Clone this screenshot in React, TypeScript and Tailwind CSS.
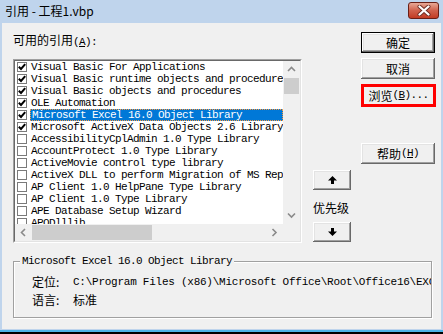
import React from "react";

const MONO = "font-['Liberation_Mono',monospace] text-[11px] tracking-[-0.6px]";
const CJK = "font-['Noto_Sans_CJK_SC','Noto_Sans',sans-serif] text-[12px]";

const items: { label: string; checked: boolean; selected?: boolean }[] = [
  { label: "Visual Basic For Applications", checked: true },
  { label: "Visual Basic runtime objects and procedures", checked: true },
  { label: "Visual Basic objects and procedures", checked: true },
  { label: "OLE Automation", checked: true },
  { label: "Microsoft Excel 16.0 Object Library", checked: true, selected: true },
  { label: "Microsoft ActiveX Data Objects 2.6 Library", checked: true },
  { label: "AccessibilityCplAdmin 1.0 Type Library", checked: false },
  { label: "AccountProtect 1.0 Type Library", checked: false },
  { label: "ActiveMovie control type library", checked: false },
  { label: "ActiveX DLL to perform Migration of MS Repository", checked: false },
  { label: "AP Client 1.0 HelpPane Type Library", checked: false },
  { label: "AP Client 1.0 Type Library", checked: false },
  { label: "APE Database Setup Wizard", checked: false },
  { label: "APODlllib", checked: false },
];

const BTN3D =
  "bg-[#f0f0f0] shadow-[inset_-1px_-1px_0_#696969,inset_1px_1px_0_#ffffff,inset_-2px_-2px_0_#a0a0a0,inset_2px_2px_0_#e3e3e3]";

function Check({ checked }: { checked: boolean }) {
  return (
    <div className="w-[10px] h-[10px] border border-[#7a7a7a] bg-white flex items-center justify-center shrink-0">
      {checked && (
        <svg width="8" height="8" viewBox="0 0 8 8">
          <polyline points="0.8,3.8 3,6 7.2,1.2" fill="none" stroke="#000" strokeWidth="2" />
        </svg>
      )}
    </div>
  );
}

function Chevron({ dir }: { dir: "up" | "down" | "left" | "right" }) {
  const pts: Record<string, string> = {
    up: "1,5 4.5,1.5 8,5",
    down: "1,1.5 4.5,5 8,1.5",
    left: "5,1 1.5,4.5 5,8",
    right: "1.5,1 5,4.5 1.5,8",
  };
  const vertical = dir === "up" || dir === "down";
  return (
    <svg width={vertical ? 9 : 7} height={vertical ? 7 : 9} viewBox={vertical ? "0 0 9 7" : "0 0 7 9"}>
      <polyline points={pts[dir]} fill="none" stroke="#8a8a8a" strokeWidth="1.6" />
    </svg>
  );
}

function ArrowIcon({ up }: { up: boolean }) {
  return (
    <svg width="9" height="8" viewBox="0 0 9 8">
      <polygon
        points={up ? "4.5,0 9,4.5 6,4.5 6,8 3,8 3,4.5 0,4.5" : "4.5,8 9,3.5 6,3.5 6,0 3,0 3,3.5 0,3.5"}
        fill="#000"
      />
    </svg>
  );
}

export default function App() {
  return (
    <div className="w-[443px] h-[334px] bg-black flex flex-col overflow-hidden">
      <div className="h-[332px] bg-[#bfd4ec] flex flex-col">
        {/* Title bar */}
        <div className="h-[23px] flex items-start shrink-0">
          <div className={`${CJK} pl-[5px] h-[22px] leading-[22px] text-black`}>引用 - 工程1.vbp</div>
          <div className="ml-auto mr-[4px] mt-[2px] w-[31px] h-[17px] rounded-[3px] border border-[#6a1f16] bg-linear-to-b from-[#e7a896] via-[#d0614c] to-[#c23a22] flex items-center justify-center">
            <svg width="14" height="11" viewBox="0 0 14 11">
              <path d="M2.5 1.5 L11.5 9.5 M11.5 1.5 L2.5 9.5" stroke="#6b2a20" strokeWidth="4" strokeLinecap="round" />
              <path d="M2.5 1.5 L11.5 9.5 M11.5 1.5 L2.5 9.5" stroke="#ffffff" strokeWidth="2.3" strokeLinecap="round" />
            </svg>
          </div>
        </div>

        {/* Client area */}
        <div className="flex-1 mx-[2px] bg-[#f0f0f0] flex flex-col pl-[11px] pt-[9px]">
          <div className="flex">
            {/* Left column */}
            <div className="w-[289px] flex flex-col">
              <div className={`${CJK} mt-[2px] h-[12px] leading-[12px] text-black whitespace-nowrap`}>
                可用的引用
                <span className={MONO}>
                  (<span className="underline">A</span>):
                </span>
              </div>
              <div className="mt-[13px] h-[184px] border border-t-[#a0a0a0] border-l-[#a0a0a0] border-r-white border-b-white">
                <div className="h-full border border-t-[#696969] border-l-[#696969] border-r-[#e3e3e3] border-b-[#e3e3e3] bg-white flex flex-col">
                  <div className="flex h-[163px]">
                    <div className="flex-1 overflow-hidden">
                      {items.map((it) => (
                        <div key={it.label} className="h-[12px] flex items-center">
                          <div className="ml-[2px]">
                            <Check checked={it.checked} />
                          </div>
                          <div
                            className={`ml-[3px] flex-1 h-[12px] pl-[1px] whitespace-nowrap overflow-hidden ${MONO} leading-[10px] ${
                              it.selected
                                ? "bg-[#0078d7] text-white border border-dotted border-[#ff9a3c] pl-0"
                                : "text-black pt-[1px]"
                            }`}
                          >
                            {it.label}
                          </div>
                        </div>
                      ))}
                    </div>
                    {/* vertical scrollbar */}
                    <div className="w-[17px] bg-[#f0f0f0] flex flex-col">
                      <div className="h-[17px] flex items-center justify-center">
                        <Chevron dir="up" />
                      </div>
                      <div className="h-[16px] mx-[1px] bg-[#cdcdcd]" />
                      <div className="flex-1" />
                      <div className="h-[17px] flex items-center justify-center">
                        <Chevron dir="down" />
                      </div>
                    </div>
                  </div>
                  {/* horizontal scrollbar */}
                  <div className="flex h-[17px]">
                    <div className="flex-1 bg-[#f0f0f0] flex">
                      <div className="w-[17px] flex items-center justify-center">
                        <Chevron dir="left" />
                      </div>
                      <div className="w-[120px] my-[1px] bg-[#cdcdcd]" />
                      <div className="flex-1" />
                      <div className="w-[17px] flex items-center justify-center">
                        <Chevron dir="right" />
                      </div>
                    </div>
                    <div className="w-[17px] bg-[#f0f0f0]" />
                  </div>
                </div>
              </div>
            </div>

            {/* Middle column */}
            <div className="w-[38px] ml-[11px] flex flex-col">
              <div className={`mt-[138px] h-[20px] ${BTN3D} flex items-center justify-center`}>
                <ArrowIcon up />
              </div>
              <div className={`${CJK} mt-[12px] h-[12px] leading-[12px] text-black whitespace-nowrap`}>优先级</div>
              <div className={`mt-[8px] h-[20px] ${BTN3D} flex items-center justify-center`}>
                <ArrowIcon up={false} />
              </div>
            </div>

            {/* Right column */}
            <div className="w-[74px] ml-[10px] flex flex-col">
              <div className="h-[21px] border border-black">
                <div className={`h-full ${BTN3D} ${CJK} flex items-center justify-center text-black`}>确定</div>
              </div>
              <div className={`mt-[5px] h-[21px] ${BTN3D} ${CJK} flex items-center justify-center text-black`}>取消</div>
              <div className={`mt-[5px] w-[75px] h-[23px] border-[3px] border-[#ff0000] bg-[#f0f0f0] ${CJK} flex items-center justify-center text-black whitespace-nowrap`}>
                浏览
                <span className={MONO}>
                  (<span className="underline">B</span>)...
                </span>
              </div>
              <div className={`mt-[36px] h-[21px] ${BTN3D} ${CJK} flex items-center justify-center text-black whitespace-nowrap`}>
                帮助
                <span className={MONO}>
                  (<span className="underline">H</span>)
                </span>
              </div>
            </div>
          </div>

          {/* Group box */}
          <div className="relative mt-[18px] w-[419px] h-[57px] border border-[#a0a0a0] shadow-[1px_1px_0_#ffffff,inset_1px_1px_0_#ffffff]">
            <div className={`absolute left-[6px] -top-[7px] px-[2px] bg-[#f0f0f0] ${MONO} leading-[12px] text-black whitespace-nowrap`}>
              Microsoft Excel 16.0 Object Library
            </div>
            <div className="pl-[18px] pt-[14px] flex flex-col overflow-hidden h-full">
              <div className="h-[12px] flex items-center whitespace-nowrap">
                <span className={`${CJK} w-[41px] shrink-0 leading-[12px] text-black`}>定位:</span>
                <span className="font-['Liberation_Mono',monospace] text-[11px] tracking-[-0.25px] leading-[12px] text-black">
                  {"C:\\Program Files (x86)\\Microsoft Office\\Root\\Office16\\EXCEL.EXE"}
                </span>
              </div>
              <div className="mt-[6px] h-[12px] flex items-center whitespace-nowrap">
                <span className={`${CJK} w-[41px] shrink-0 leading-[12px] text-black`}>语言:</span>
                <span className={`${CJK} leading-[12px] text-black`}>标准</span>
              </div>
            </div>
          </div>
        </div>
        <div className="h-[1px] bg-[#bfd4ec] shrink-0" />
        <div className="h-[2px] bg-[#4cb3e6] shrink-0" />
      </div>
    </div>
  );
}
